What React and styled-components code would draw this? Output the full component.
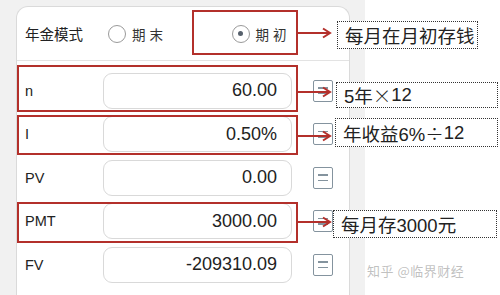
import React from 'react';
import styled, { createGlobalStyle } from 'styled-components';

const RED = '#b3302b';

const Global = createGlobalStyle`
  html, body { margin: 0; padding: 0; background: #fff; }
  body {
    width: 500px; height: 295px; overflow: hidden;
    font-family: "Liberation Sans", "Noto Sans CJK SC", sans-serif;
  }
`;

const Page = styled.div`
  position: relative;
  display: flex;
  width: 500px;
  height: 295px;
  background: #fff;
  overflow: hidden;
`;

const Phone = styled.div`
  flex: 0 0 365px;
  box-sizing: border-box;
  height: 295px;
  padding: 6px 15px 0 16px;
  background: #f1f1f1;
`;

const Card = styled.div`
  box-sizing: border-box;
  height: 100%;
  background: #fff;
  border: 1px solid #dadada;
  border-bottom: none;
  border-radius: 12px 12px 0 0;
`;

const Header = styled.div`
  position: relative;
  display: flex;
  align-items: center;
  height: 53px;
  padding-left: 8px;
  border-bottom: 1px solid #e3e3e3;
`;

const ModeLabel = styled.span`
  flex: 0 0 83px;
  font-family: "Noto Sans CJK SC", sans-serif;
  font-size: 14.5px;
  color: #222;
`;

const Option = styled.label`
  display: flex;
  align-items: center;
  gap: 6px;
  margin-left: ${p => p.$offset || 0}px;
  font-family: "Noto Sans CJK SC", sans-serif;
  font-size: 13.5px;
  letter-spacing: 0.5px;
  color: #333;
`;

const Radio = styled.span`
  box-sizing: border-box;
  width: 18px;
  height: 18px;
  border-radius: 50%;
  border: 1px solid #9a9a9a;
  display: flex;
  align-items: center;
  justify-content: center;
  &::after {
    content: '';
    width: 5px;
    height: 5px;
    border-radius: 50%;
    background: #56606c;
    display: ${p => (p.$checked ? 'block' : 'none')};
  }
`;

const Body = styled.div`
  padding-top: 8px;
`;

const Row = styled.div`
  position: relative;
  display: flex;
  align-items: center;
  height: 43.5px;
`;

const FieldLabel = styled.span`
  flex: 0 0 86px;
  box-sizing: border-box;
  padding-left: 8px;
  font-size: 14.5px;
  color: #222;
`;

const ValueBox = styled.div`
  flex: 0 0 189px;
  box-sizing: border-box;
  height: 36px;
  display: flex;
  align-items: center;
  justify-content: flex-end;
  padding-right: 14px;
  border: 1px solid #d9d9d9;
  border-radius: 9px;
  font-size: 18px;
  color: #222;
`;

const EqualsButton = styled.span`
  box-sizing: border-box;
  margin-left: 21px;
  width: 20px;
  height: 22px;
  border: 1.5px solid #84939e;
  border-radius: 2px;
  display: flex;
  flex-direction: column;
  justify-content: center;
  align-items: center;
  gap: 4px;
  &::before, &::after {
    content: '';
    width: 10px;
    height: 1.5px;
    background: #84939e;
  }
`;

const Mark = styled.div`
  position: absolute;
  left: ${p => p.$left}px;
  top: ${p => p.$top}px;
  width: ${p => p.$w}px;
  height: ${p => p.$h}px;
  box-sizing: border-box;
  border: 2px solid ${RED};
  pointer-events: none;
`;

const ArrowSvg = styled.svg`
  position: absolute;
  left: 281px;
  top: ${p => p.$y - 6}px;
  overflow: visible;
`;

const Note = styled.div`
  position: absolute;
  left: ${p => p.$left}px;
  top: ${p => p.$top}px;
  width: ${p => p.$w}px;
  height: ${p => p.$h}px;
  box-sizing: border-box;
  display: flex;
  align-items: center;
  padding-left: 7px;
  background: #fff;
  border: 1px dotted #333;
  font-family: "Liberation Sans", "Noto Sans CJK SC", sans-serif;
  font-size: 18.5px;
  color: #222;
  white-space: nowrap;
  z-index: 2;
`;

const Sym = styled.span`
  font-family: "Noto Sans CJK SC", sans-serif;
  font-weight: 300;
`;

const Watermark = styled.div`
  position: absolute;
  left: 367px;
  top: 261px;
  font-family: "Noto Sans CJK SC", sans-serif;
  font-size: 13px;
  color: rgba(140, 140, 140, 0.55);
  letter-spacing: 0.5px;
`;

const Arrow = ({ y }) => (
  <ArrowSvg $y={y} width="36" height="12" viewBox="0 0 36 12">
    <path d="M0 6 H32" stroke={RED} strokeWidth="2" fill="none" />
    <path d="M25 1.5 L32 6 L25 10.5" stroke={RED} strokeWidth="2" fill="none" strokeLinejoin="miter" />
  </ArrowSvg>
);

const rows = [
  { label: 'n', value: '60.00', mark: { top: -4, h: 47 }, arrow: 23, note: { text: <>5年<Sym>×</Sym>12</>, left: 319, top: 13, w: 162, h: 26 } },
  { label: 'I', value: '0.50%', mark: { top: 2.5, h: 40 }, arrow: 23.5, note: { text: <>年收益6%<Sym>÷</Sym>12</>, left: 318, top: 5.5, w: 163, h: 29 } },
  { label: 'PV', value: '0.00' },
  { label: 'PMT', value: '3000.00', mark: { top: 2.5, h: 41 }, arrow: 22.5, note: { text: '每月存3000元', left: 316, top: 10.5, w: 164, h: 28 } },
  { label: 'FV', value: '-209310.09' },
];

export default function App() {
  return (
    <Page>
      <Global />
      <Phone>
        <Card>
          <Header>
            <ModeLabel>年金模式</ModeLabel>
            <Option>
              <Radio />
              期 末
            </Option>
            <Option $offset={68}>
              <Radio $checked />
              期 初
            </Option>
            <Mark $left={175} $top={3} $w={106} $h={45} />
            <Arrow y={26} />
            <Note $left={320} $top={14} $w={141} $h={28}>每月在月初存钱</Note>
          </Header>
          <Body>
            {rows.map(r => (
              <Row key={r.label}>
                <FieldLabel>{r.label}</FieldLabel>
                <ValueBox>{r.value}</ValueBox>
                <EqualsButton />
                {r.mark && <Mark $left={0} $top={r.mark.top} $w={281} $h={r.mark.h} />}
                {r.arrow !== undefined && <Arrow y={r.arrow} />}
                {r.note && (
                  <Note $left={r.note.left} $top={r.note.top} $w={r.note.w} $h={r.note.h}>
                    {r.note.text}
                  </Note>
                )}
              </Row>
            ))}
          </Body>
        </Card>
      </Phone>
      <Watermark>知乎 @临界财经</Watermark>
    </Page>
  );
}
